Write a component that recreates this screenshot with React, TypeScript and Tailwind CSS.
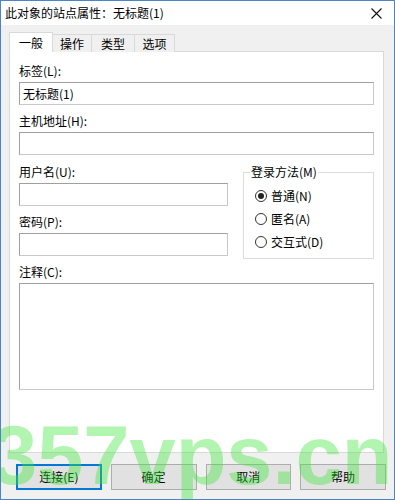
import React from "react";

const font = { fontFamily: '"Noto Sans CJK SC", "Liberation Sans", sans-serif' };

function Input({ className = "" }: { className?: string }) {
  return <div className={"bg-white border border-[#a0a0a0] border-r-[#c8c8c8] border-b-[#c8c8c8] " + className} />;
}

function Radio({ checked, label }: { checked?: boolean; label: string }) {
  return (
    <div className="flex items-center h-[23px]">
      <div className="w-[12px] h-[12px] rounded-full border border-[#333] bg-white flex items-center justify-center ml-[11px]">
        {checked && <div className="w-[6px] h-[6px] rounded-full bg-[#222]" />}
      </div>
      <span className="ml-[4px] text-[12px] leading-[16px] text-black">{label}</span>
    </div>
  );
}

function Btn({ label, def, w }: { label: string; def?: boolean; w: string }) {
  return (
    <div
      className={
        "h-[26px] flex items-center justify-center text-[12px] text-black bg-[#e1e1e1] " +
        w +
        (def ? " border-2 border-[#0078d7]" : " border border-[#adadad]")
      }
    >
      {label}
    </div>
  );
}

export default function App() {
  return (
    <div className="relative w-[395px] h-[500px] overflow-hidden border border-[#4a86c5] bg-[#f0f0f0] flex flex-col" style={font}>
      {/* title bar */}
      <div className="h-[24px] bg-white flex items-center justify-between shrink-0">
        <span className="ml-[4px] text-[12px] leading-[16px] text-black">此对象的站点属性：无标题(1)</span>
        <svg width="11" height="11" viewBox="0 0 11 11" className="mr-[12px]">
          <path d="M0.5 0.5 L10.5 10.5 M10.5 0.5 L0.5 10.5" stroke="#111" strokeWidth="1.1" />
        </svg>
      </div>
      {/* body */}
      <div className="flex-1 flex flex-col px-[8px] pt-[7px]">
        {/* tabs */}
        <div className="flex items-end h-[20px] relative z-10">
          <div className="h-[20px] w-[44px] bg-white border border-[#d9d9d9] border-b-0 flex items-center justify-center text-[12px] text-black">一般</div>
          <div className="h-[18px] w-[39px] bg-[#f0f0f0] border border-[#d9d9d9] border-l-0 border-b-0 flex items-center justify-center text-[12px] text-black">操作</div>
          <div className="h-[18px] w-[43px] bg-[#f0f0f0] border border-[#d9d9d9] border-l-0 border-b-0 flex items-center justify-center text-[12px] text-black">类型</div>
          <div className="h-[18px] w-[40px] bg-[#f0f0f0] border border-[#d9d9d9] border-l-0 border-b-0 flex items-center justify-center text-[12px] text-black">选项</div>
        </div>
        {/* panel */}
        <div className="h-[402px] w-[375px] bg-white border border-[#d9d9d9] -mt-px px-[9px] pt-[11px] text-[12px] text-black">
          <div className="h-[16px] leading-[16px]">标签(L):</div>
          <div className="mt-[3px] h-[23px] bg-white border border-[#a0a0a0] border-r-[#c8c8c8] border-b-[#c8c8c8] flex items-center px-[3px] leading-[16px]">无标题(1)</div>
          <div className="mt-[8px] h-[16px] leading-[16px]">主机地址(H):</div>
          <Input className="mt-[3px] h-[23px]" />
          <div className="mt-[9px] flex items-start h-[92px]">
            <div className="w-[209px]">
              <div className="h-[16px] leading-[16px]">用户名(U):</div>
              <Input className="mt-[3px] h-[23px]" />
              <div className="mt-[8px] h-[16px] leading-[16px]">密码(P):</div>
              <Input className="mt-[3px] h-[23px]" />
            </div>
            <div className="relative ml-[15px] mt-[8px] w-[131px] h-[87px] shrink-0 border border-[#dcdcdc] pt-[11px]">
              <span className="absolute -top-[9px] left-[6px] bg-white px-[1px] leading-[16px]">登录方法(M)</span>
              <Radio checked label="普通(N)" />
              <Radio label="匿名(A)" />
              <Radio label="交互式(D)" />
            </div>
          </div>
          <div className="mt-[8px] h-[16px] leading-[16px]">注释(C):</div>
          <Input className="mt-[3px] h-[107px]" />
        </div>
        {/* buttons */}
        <div className="mt-[11px] ml-[7px] flex gap-[9px]">
          <Btn label="连接(E)" def w="w-[86px]" />
          <Btn label="确定" w="w-[86px]" />
          <Btn label="取消" w="w-[86px]" />
          <Btn label="帮助" w="w-[86px]" />
        </div>
      </div>
      {/* watermark */}
      <div
        className="absolute left-[-10px] top-[413px] text-[83px] leading-none font-bold whitespace-nowrap pointer-events-none text-[rgba(60,230,60,0.4)]"
        style={{ fontFamily: '"Liberation Sans", Arial, sans-serif' }}
      >
        357vps.cn
      </div>
    </div>
  );
}
